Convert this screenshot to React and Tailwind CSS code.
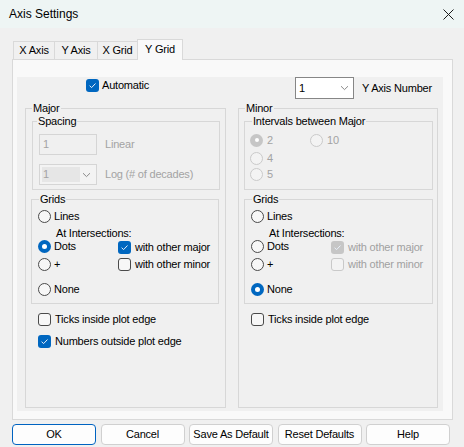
import React from 'react';

const Check = ({ checked, disabled }) => {
    if (checked) {
        return (
            <span className={`flex h-[13px] w-[13px] shrink-0 items-center justify-center rounded-[3px] ${disabled ? 'bg-[#c6c6c6]' : 'bg-[#0067c0]'}`}>
                <svg width="9" height="9" viewBox="0 0 9 9" fill="none">
                    <path d="M1.6 4.7 3.6 6.6 7.5 2.5" stroke="#e8f0fa" strokeWidth="1" />
                </svg>
            </span>
        );
    }
    return (
        <span className={`h-[13px] w-[13px] shrink-0 rounded-[3px] border ${disabled ? 'border-[#c9c9c9] bg-[#f3f3f3]' : 'border-[#4a4a4a] bg-[#f7f7f7]'}`} />
    );
};

const Radio = ({ checked, disabled }) => {
    if (checked) {
        return (
            <span className={`flex h-[13px] w-[13px] shrink-0 items-center justify-center rounded-full ${disabled ? 'bg-[#c6c6c6]' : 'bg-[#0067c0]'}`}>
                <span className={`rounded-full bg-white ${disabled ? 'h-[4px] w-[4px]' : 'h-[5px] w-[5px]'}`} />
            </span>
        );
    }
    return (
        <span className={`h-[13px] w-[13px] shrink-0 rounded-full border ${disabled ? 'border-[#cacaca] bg-[#f3f3f3]' : 'border-[#4a4a4a] bg-[#f7f7f7]'}`} />
    );
};

const Chevron = () => (
    <svg width="9" height="6" viewBox="0 0 9 6" fill="none">
        <path d="M1 1.2 4.5 4.6 8 1.2" stroke="#8a8a8a" strokeWidth="1" />
    </svg>
);

const GridsGroup = ({ selected, majorChecked, checksDisabled, widthClass }) => (
    <fieldset className={`mt-[2px] ml-[5px] border border-[#d7d7d7] pb-[2px] ${widthClass}`}>
        <legend className="ml-[7px] px-[1px] leading-[14px]">Grids</legend>
        <div className="flex h-[20px] items-center gap-[3px] pl-[6px]">
            <Radio checked={selected === 'lines'} />
            <span>Lines</span>
        </div>
        <div className="flex h-[14px] items-center pl-[24px]">At Intersections:</div>
        <div className="flex h-[12px] items-center pl-[6px]">
            <div className="flex w-[80px] items-center gap-[3px]">
                <Radio checked={selected === 'dots'} />
                <span>Dots</span>
            </div>
            <div className={`relative top-[1px] flex items-center gap-[4px] ${checksDisabled ? 'text-[#a0a0a0]' : ''}`}>
                <Check checked={majorChecked} disabled={checksDisabled} />
                <span>with other major</span>
            </div>
        </div>
        <div className="flex h-[25px] items-center pl-[6px]">
            <div className="flex w-[80px] items-center gap-[3px]">
                <Radio checked={selected === 'plus'} />
                <span>+</span>
            </div>
            <div className={`flex items-center gap-[4px] ${checksDisabled ? 'text-[#a0a0a0]' : ''}`}>
                <Check checked={false} disabled={checksDisabled} />
                <span>with other minor</span>
            </div>
        </div>
        <div className="flex h-[24px] items-center gap-[3px] pl-[6px]">
            <Radio checked={selected === 'none'} />
            <span>None</span>
        </div>
    </fieldset>
);

const Tab = ({ label, active, widthClass, first }) => (
    <div
        className={`flex items-center justify-center border-l border-r border-t border-[#d9d9d9] ${first ? 'ml-[1px]' : '-ml-px'} ${widthClass} ${active ? 'relative z-10 -mb-px h-[21px] bg-[#f9f9f9] pb-[2px]' : 'h-[18px] bg-[#f0f0f0]'}`}
    >
        {label}
    </div>
);

const buttons = ['OK', 'Cancel', 'Save As Default', 'Reset Defaults', 'Help'];

const App = () => {
    return (
        <div className="h-[447px] w-[464px] overflow-hidden bg-[#f0f0f0] font-['Liberation_Sans',Arial,sans-serif] text-[11px] tracking-[-0.2px] text-black">
            <div className="flex h-[28px] items-center justify-between bg-[#eef5f4] pl-[9px] pr-[10px]">
                <span className="text-[12px] tracking-normal">Axis Settings</span>
                <svg width="11" height="11" viewBox="0 0 11 11" fill="none">
                    <path d="M0.5 0.5 10.5 10.5 M10.5 0.5 0.5 10.5" stroke="#1a1a1a" strokeWidth="1" />
                </svg>
            </div>

            <div className="pl-[12px] pt-[11px]">
                <div className="flex h-[20px] items-end">
                    <Tab label="X Axis" widthClass="w-[42px]" first />
                    <Tab label="Y Axis" widthClass="w-[44px]" />
                    <Tab label="X Grid" widthClass="w-[41px]" />
                    <Tab label="Y Grid" widthClass="w-[46px]" active />
                </div>

                <div className="h-[361px] w-[441px] border border-[#d9d9d9] bg-[#f9f9f9]">
                    <div className="ml-[4px] mt-[18px] h-[334px] w-[426px] bg-[#f0f0f0]">
                        <div className="-mt-px flex h-[22px]">
                            <div className="ml-[69px] mt-[2px] flex h-[13px] w-[209px] items-center gap-[3px] self-start">
                                <Check checked />
                                <span>Automatic</span>
                            </div>
                            <div className="flex h-[22px] w-[59px] items-center justify-between border border-[#868686] bg-white pl-[3px] pr-[4px]">
                                <span>1</span>
                                <Chevron />
                            </div>
                            <span className="ml-[8px] self-center">Y Axis Number</span>
                        </div>

                        <div className="mt-[2px] flex gap-[12px] pl-[8px]">
                            <fieldset className="h-[307px] w-[201px] border border-[#d7d7d7]">
                                <legend className="ml-[6px] px-[1px] leading-[14px]">Major</legend>
                                <fieldset className="-mt-px ml-[6px] w-[188px] border border-[#d7d7d7] pb-[4px]">
                                    <legend className="ml-[4px] px-[1px] leading-[14px]">Spacing</legend>
                                    <div className="ml-[6px] mt-[6px] flex items-center text-[#a3a3a3]">
                                        <div className="flex h-[21px] w-[58px] items-center border border-[#d5d5d5] bg-[#f0f0f0] pl-[3px]">1</div>
                                        <span className="ml-[8px]">Linear</span>
                                    </div>
                                    <div className="ml-[6px] mt-[9px] flex items-center text-[#a3a3a3]">
                                        <div className="flex h-[21px] w-[58px] items-center justify-between border border-[#d5d5d5] bg-[#f3f3f3] p-[2px] pr-[5px]">
                                            <span className="flex h-full w-[38px] items-center bg-[#e6e6e6] pl-[1px]">1</span>
                                            <Chevron />
                                        </div>
                                        <span className="ml-[8px]">Log (# of decades)</span>
                                    </div>
                                </fieldset>
                                <GridsGroup selected="dots" majorChecked widthClass="w-[188px]" />
                                <div className="mt-[7px] flex h-[16px] items-center gap-[4px] pl-[12px]">
                                    <Check />
                                    <span>Ticks inside plot edge</span>
                                </div>
                                <div className="mt-[6px] flex h-[16px] items-center gap-[4px] pl-[12px]">
                                    <Check checked />
                                    <span>Numbers outside plot edge</span>
                                </div>
                            </fieldset>

                            <fieldset className="h-[307px] w-[200px] border border-[#d7d7d7]">
                                <legend className="ml-[6px] px-[1px] leading-[14px]">Minor</legend>
                                <fieldset className="-mt-px ml-[5px] w-[189px] border border-[#d7d7d7] pb-[7px] text-[#a3a3a3]">
                                    <legend className="ml-[7px] px-[1px] leading-[14px] text-black">Intervals between Major</legend>
                                    <div className="mt-[4px] flex h-[16px] items-center pl-[5px]">
                                        <div className="flex w-[60px] items-center gap-[4px]">
                                            <Radio checked disabled />
                                            <span>2</span>
                                        </div>
                                        <div className="flex items-center gap-[4px]">
                                            <Radio disabled />
                                            <span>10</span>
                                        </div>
                                    </div>
                                    <div className="mt-[2px] flex h-[16px] items-center gap-[4px] pl-[5px]">
                                        <Radio disabled />
                                        <span>4</span>
                                    </div>
                                    <div className="flex h-[16px] items-center gap-[4px] pl-[5px]">
                                        <Radio disabled />
                                        <span>5</span>
                                    </div>
                                </fieldset>
                                <GridsGroup selected="none" majorChecked checksDisabled widthClass="w-[189px]" />
                                <div className="mt-[7px] flex h-[16px] items-center gap-[4px] pl-[12px]">
                                    <Check />
                                    <span>Ticks inside plot edge</span>
                                </div>
                            </fieldset>
                        </div>
                    </div>
                </div>

                <div className="mt-[4px] flex gap-[4.5px]">
                    {buttons.map((b) => (
                        <div
                            key={b}
                            className={`flex h-[21px] w-[84px] items-center justify-center rounded-[4px] border bg-[#fdfdfd] ${b === 'OK' ? 'border-[#0063c1]' : 'border-[#d0d0d0]'}`}
                        >
                            {b}
                        </div>
                    ))}
                </div>
            </div>
        </div>
    );
};

export default App;
